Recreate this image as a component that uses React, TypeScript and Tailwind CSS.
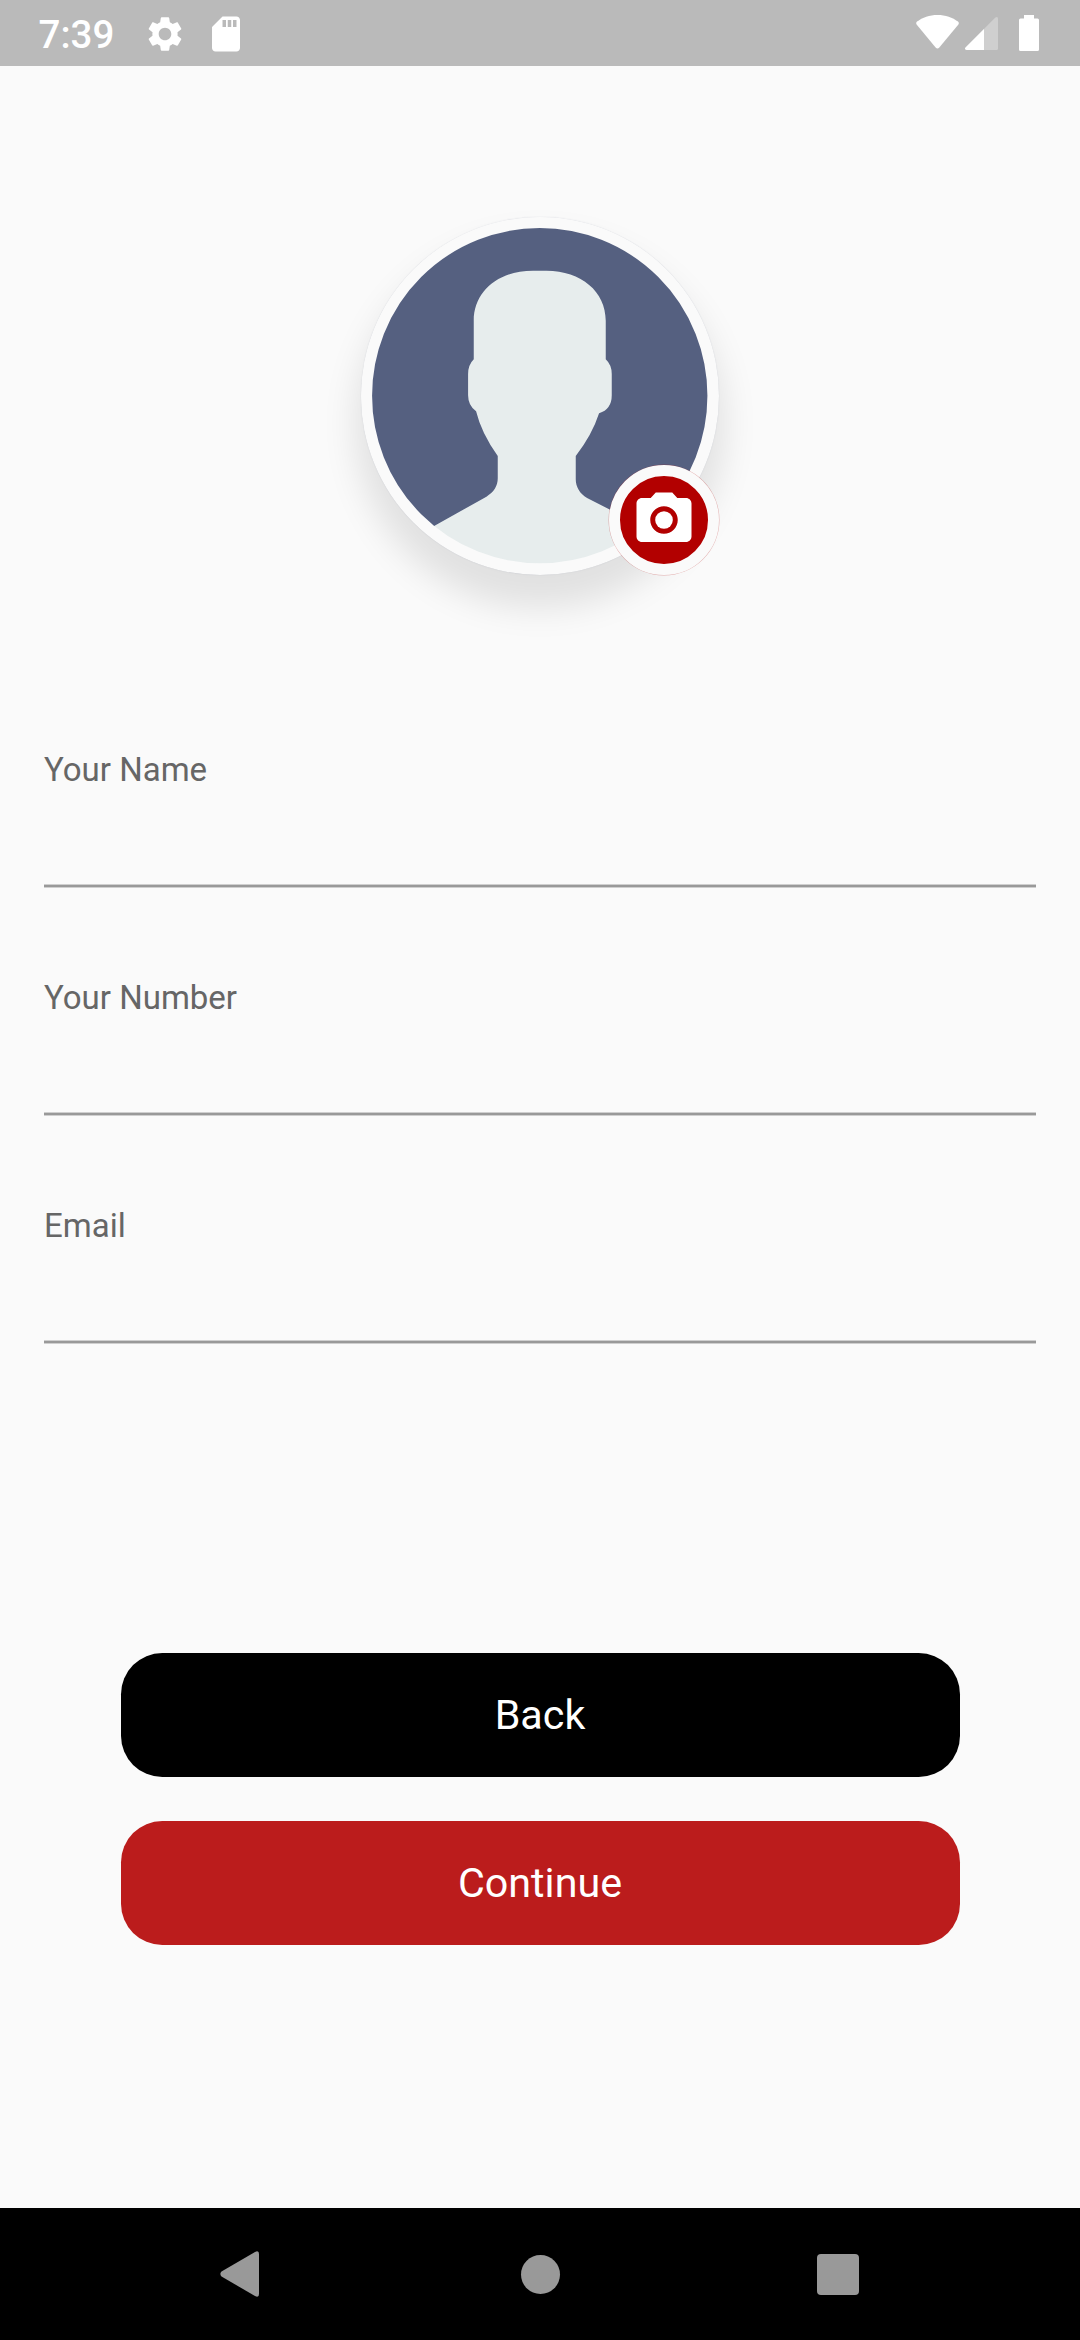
import React from "react";

function StatusBar() {
  return (
    <header className="flex h-[66px] shrink-0 items-start bg-[#bababa] text-white">
      <span className="ml-[38.5px] mt-[11px] w-[77.5px] text-[38.5px] font-medium leading-[48px]">7:39</span>
      <svg className="ml-[28px] mt-[12.5px] size-[42px]" viewBox="0 0 24 24" fill="currentColor">
        <path d="M19.14 12.94c.04-.3.06-.61.06-.94 0-.32-.02-.64-.07-.94l2.03-1.58c.18-.14.23-.41.12-.61l-1.92-3.32c-.12-.22-.37-.29-.59-.22l-2.39.96c-.5-.38-1.03-.7-1.62-.94l-.36-2.54c-.04-.24-.24-.41-.48-.41h-3.84c-.24 0-.43.17-.47.41l-.36 2.54c-.59.24-1.13.57-1.62.94l-2.39-.96c-.22-.08-.47 0-.59.22L2.74 8.87c-.12.21-.08.47.12.61l2.03 1.58c-.05.3-.09.63-.09.94s.02.64.07.94l-2.03 1.58c-.18.14-.23.41-.12.61l1.92 3.32c.12.22.37.29.59.22l2.39-.96c.5.38 1.03.7 1.62.94l.36 2.54c.05.24.24.41.48.41h3.84c.24 0 .44-.17.47-.41l.36-2.54c.59-.24 1.13-.56 1.62-.94l2.39.96c.22.08.47 0 .59-.22l1.92-3.32c.12-.22.07-.47-.12-.61l-2.01-1.58zM12 15.6c-1.98 0-3.6-1.62-3.6-3.6s1.62-3.6 3.6-3.6 3.6 1.62 3.6 3.6-1.62 3.6-3.6 3.6z" />
      </svg>
      <svg className="ml-[18.5px] mt-[12.5px] size-[42px]" viewBox="0 0 24 24" fill="currentColor">
        <path d="M18 2h-8L4.02 8 4 20c0 1.1.9 2 2 2h12c1.1 0 2-.9 2-2V4c0-1.1-.9-2-2-2zm-6 6h-2V4h2v4zm3 0h-2V4h2v4zm3 0h-2V4h2v4z" />
      </svg>
      <svg className="ml-auto mr-[6px] mt-[15px] h-[34px] w-[43px]" viewBox="0 0 43 34" fill="currentColor">
        <path d="M21.500 0C13.500 0 6.500 2.500 1 6.600Q-.5 8 .8 9.700L19.600 32.600Q21.500 34.300 23.300 32.600L42.200 9.700Q43.500 8 42 6.600C36.500 2.500 29.500 0 21.500 0Z" />
      </svg>
      <svg className="mr-[21px] mt-[17px] size-[33px]" viewBox="0 0 33 33" fill="currentColor">
        <path d="M30.300.6Q33-1 33 1.800V31.500Q33 33 31.500 33H1.500Q-1 32.500.5 30.400Z" fillOpacity="0.3" />
        <path d="M19 11.900V33H1.500Q-1 32.500.5 30.400Z" />
      </svg>
      <svg className="mr-[41px] mt-[15px] h-[36px] w-[20px]" viewBox="0 0 20 36" fill="currentColor">
        <path d="M5 0h10v3.500h3.500q1.500 0 1.500 1.500v29.500q0 1.500-1.500 1.500h-17Q0 36 0 34.500V5q0-1.500 1.500-1.500H5Z" />
      </svg>
    </header>
  );
}

function Avatar() {
  return (
    <div className="relative mx-auto mt-[151px] size-[357.5px] shrink-0 rounded-full bg-[#fafafa] shadow-[0_27.5px_34.5px_5.5px_rgba(0,0,0,0.1),0_0_1px_rgba(85,96,128,0.25)]">
      <svg className="block size-full" viewBox="63.75 81 1072.5 1072.5">
        <clipPath id="portrait">
          <circle cx="600" cy="617" r="515" />
        </clipPath>
        <g clipPath="url(#portrait)">
          <rect x="63" y="81" width="1074" height="1074" fill="#556080" />
          <path
            fill="#e7eded"
            d="M402 392C402 305 475 242 580 242H620C725 242 798 305 798 392V508Q816 525 816 552V616Q816 658 778 670Q757 735 708 798V868C708 890 720 912 742 924L950 1030V1160H20L180 1066L440 920C462 907 474 888 474 865V798Q425 730 409 664Q385 647 385 616V552Q385 525 402 508Z"
          />
        </g>
        <circle cx="600" cy="617" r="519" fill="none" stroke="#fafafa" strokeWidth="32" />
      </svg>
      <button
        aria-label="Change photo"
        className="absolute bottom-0 right-0 flex size-[110px] items-center justify-center rounded-full border-[11px] border-[#fafafa] bg-[#b20000] text-white shadow-[0_0_0_0.5px_rgba(178,0,0,0.3)]"
      >
        <svg className="size-[66px] shrink-0" viewBox="0 0 24 24" fill="currentColor">
          <circle cx="12" cy="12" r="3.2" />
          <path d="M9 2L7.170 4H4c-1.100 0-2 .9-2 2v12c0 1.100.9 2 2 2h16c1.100 0 2-.9 2-2V6c0-1.100-.9-2-2-2h-3.170L15 2H9zm3 15c-2.760 0-5-2.240-5-5s2.240-5 5-5 5 2.240 5 5-2.240 5-5 5z" />
        </svg>
      </button>
    </div>
  );
}

function Field({ label }: { label: string }) {
  return (
    <label className="flex h-[137px] flex-col justify-between">
      <span className="text-[33px] leading-[38px] text-[#666666]">{label}</span>
      <span className="h-1 border-y border-[#cfcfcf] bg-[#999999]" />
    </label>
  );
}

export default function App() {
  return (
    <div className="flex h-[2340px] w-[1080px] flex-col overflow-hidden bg-[#fafafa] font-['Roboto',sans-serif]">
      <StatusBar />
      <main className="flex flex-1 flex-col">
        <Avatar />
        <form className="mx-11 mt-[176.5px] flex flex-col gap-[91px]">
          <Field label="Your Name" />
          <Field label="Your Number" />
          <Field label="Email" />
        </form>
        <div className="mx-auto mt-[309px] flex w-[839px] flex-col gap-[44.25px] text-[41.25px] text-white">
          <button className="h-[123.75px] rounded-[41.25px] bg-black pt-[2px]">Back</button>
          <button className="h-[123.75px] rounded-[41.25px] bg-[#bb1c1c] pt-[2px]">Continue</button>
        </div>
      </main>
      <nav className="flex h-[132px] shrink-0 items-center bg-black text-[#999999]">
        <svg className="ml-[220px] h-[46px] w-[39px]" viewBox="0 0 39 46" fill="currentColor">
          <path d="M35 1Q39-1 39 3V43Q39 47 35 45L1.500 25.500Q-.8 23 1.500 20.500Z" />
        </svg>
        <span className="ml-[262px] mt-px size-[39px] rounded-full bg-current" />
        <span className="ml-[257px] mt-px size-[41.500px] rounded-[4px] bg-current" />
      </nav>
    </div>
  );
}
